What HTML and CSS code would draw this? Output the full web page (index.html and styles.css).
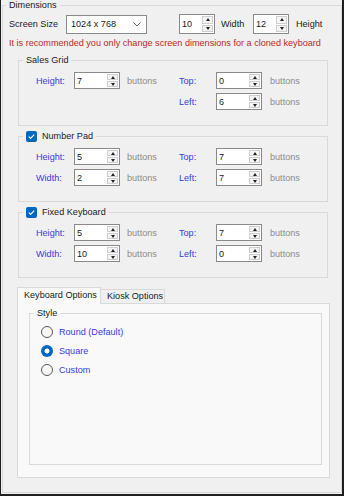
FILE: index.html
```html
<!DOCTYPE html>
<html lang="en">
<head>
    <meta charset="UTF-8">
    <title>Keyboard Settings</title>
    <link rel="stylesheet" href="styles.css">
</head>
<body>
    <div class="window">
        <fieldset class="group dims">
            <legend>Dimensions</legend>
            <div class="dims-body">
                <div class="screen-row">
                    <span class="screen-label">Screen Size</span>
                    <div class="combo">
                        <span>1024 x 768</span>
                        <svg width="8" height="5" viewBox="0 0 8 5"><polyline points="0.5,0.5 4,4 7.5,0.5" fill="none" stroke="#606060" stroke-width="1"/></svg>
                    </div>
                    <div class="spin spin-lg"><span class="val">10</span><div class="spin-btns"><span class="up"></span><span class="down"></span></div></div>
                    <span class="dim-label">Width</span>
                    <div class="spin spin-lg"><span class="val">12</span><div class="spin-btns"><span class="up"></span><span class="down"></span></div></div>
                    <span class="dim-label last">Height</span>
                </div>
                <p class="warning">It is recommended you only change screen dimensions for a cloned keyboard</p>

                <fieldset class="group sub">
                    <legend>Sales Grid</legend>
                    <div class="grid">
                        <span class="blue">Height:</span>
                        <div class="spin"><span class="val">7</span><div class="spin-btns"><span class="up"></span><span class="down"></span></div></div>
                        <span class="unit">buttons</span>
                        <span class="blue">Top:</span>
                        <div class="spin"><span class="val">0</span><div class="spin-btns"><span class="up"></span><span class="down"></span></div></div>
                        <span class="unit">buttons</span>
                        <span class="blue right">Left:</span>
                        <div class="spin"><span class="val">6</span><div class="spin-btns"><span class="up"></span><span class="down"></span></div></div>
                        <span class="unit">buttons</span>
                    </div>
                </fieldset>

                <fieldset class="group sub">
                    <legend class="check-legend"><span class="checkbox"><svg width="11" height="11" viewBox="0 0 11 11"><polyline points="2.8,5.6 4.6,7.4 8.2,3.6" fill="none" stroke="#fff" stroke-width="1.1"/></svg></span>Number Pad</legend>
                    <div class="grid">
                        <span class="blue">Height:</span>
                        <div class="spin"><span class="val">5</span><div class="spin-btns"><span class="up"></span><span class="down"></span></div></div>
                        <span class="unit">buttons</span>
                        <span class="blue">Top:</span>
                        <div class="spin"><span class="val">7</span><div class="spin-btns"><span class="up"></span><span class="down"></span></div></div>
                        <span class="unit">buttons</span>
                        <span class="blue">Width:</span>
                        <div class="spin"><span class="val">2</span><div class="spin-btns"><span class="up"></span><span class="down"></span></div></div>
                        <span class="unit">buttons</span>
                        <span class="blue">Left:</span>
                        <div class="spin"><span class="val">7</span><div class="spin-btns"><span class="up"></span><span class="down"></span></div></div>
                        <span class="unit">buttons</span>
                    </div>
                </fieldset>

                <fieldset class="group sub">
                    <legend class="check-legend"><span class="checkbox"><svg width="11" height="11" viewBox="0 0 11 11"><polyline points="2.8,5.6 4.6,7.4 8.2,3.6" fill="none" stroke="#fff" stroke-width="1.1"/></svg></span>Fixed Keyboard</legend>
                    <div class="grid">
                        <span class="blue">Height:</span>
                        <div class="spin"><span class="val">5</span><div class="spin-btns"><span class="up"></span><span class="down"></span></div></div>
                        <span class="unit">buttons</span>
                        <span class="blue">Top:</span>
                        <div class="spin"><span class="val">7</span><div class="spin-btns"><span class="up"></span><span class="down"></span></div></div>
                        <span class="unit">buttons</span>
                        <span class="blue">Width:</span>
                        <div class="spin"><span class="val">10</span><div class="spin-btns"><span class="up"></span><span class="down"></span></div></div>
                        <span class="unit">buttons</span>
                        <span class="blue">Left:</span>
                        <div class="spin"><span class="val">0</span><div class="spin-btns"><span class="up"></span><span class="down"></span></div></div>
                        <span class="unit">buttons</span>
                    </div>
                </fieldset>

                <div class="tabs">
                    <div class="tab-strip">
                        <div class="tab active">Keyboard Options</div>
                        <div class="tab kiosk">Kiosk Options</div>
                    </div>
                    <div class="tab-panel">
                        <fieldset class="group style-group">
                            <legend>Style</legend>
                            <div class="radios">
                                <label class="radio"><span class="dot"></span>Round (Default)</label>
                                <label class="radio"><span class="dot checked"></span>Square</label>
                                <label class="radio"><span class="dot"></span>Custom</label>
                            </div>
                        </fieldset>
                    </div>
                </div>
            </div>
        </fieldset>
    </div>
</body>
</html>
```

FILE: styles.css
```css
* {
    box-sizing: border-box;
}
body {
    margin: 0;
    font-family: "Liberation Sans", Arial, sans-serif;
    font-size: 9.1px;
    color: #1a1a1a;
    background: #f0f0f0;
}
.window {
    width: 344px;
    height: 496px;
    background: #f0f0f0;
    border-left: 1px solid #1f1f1f;
    border-right: 2px solid #1f1f1f;
    border-bottom: 2px solid #1f1f1f;
    padding: 0 0 1px 1px;
}

/* group boxes */
fieldset.group {
    margin: 0;
    padding: 0;
    border: 1px solid #d9d9d9;
    min-width: 0;
}
.group > legend {
    margin-left: 4px;
    padding: 0 3px;
    height: 12px;
    line-height: 12px;
}
.dims > legend {
    margin-left: 3px;
    height: 10px;
    line-height: 10px;
}
.dims-body {
    padding: 4px 0 14px 6px;
}
.check-legend {
    display: flex;
    align-items: center;
    gap: 5px;
}
.checkbox {
    width: 11px;
    height: 11px;
    border-radius: 2px;
    background: #0067c0;
    display: flex;
}

/* top row */
.screen-row {
    display: flex;
    align-items: center;
    height: 20px;
}
.screen-label {
    width: 57px;
}
.combo {
    width: 81px;
    height: 19px;
    background: #fff;
    border: 1px solid #8a8a8a;
    display: flex;
    align-items: center;
    justify-content: space-between;
    padding: 0 5px 0 4px;
    margin-right: 32px;
}
.dim-label {
    margin-left: 6px;
    width: 32px;
}
.dim-label.last {
    margin-left: 7px;
}
.warning {
    margin: 3px 0 5px;
    line-height: 12px;
    color: #c02828;
}

/* spin boxes */
.spin {
    width: 46px;
    height: 17px;
    background: #fff;
    border: 1px solid #8a8a8a;
    display: flex;
    justify-content: space-between;
}
.spin-lg {
    width: 36px;
    height: 20px;
}
.spin .val {
    padding-left: 2px;
    align-self: center;
}
.spin-btns {
    width: 12px;
    display: flex;
    flex-direction: column;
    gap: 1px;
    padding: 1px 1px 1px 0;
}
.spin-btns span {
    flex: 1;
    background: #f4f4f4;
    border: 1px solid #cfcfcf;
    display: flex;
    align-items: center;
    justify-content: center;
}
.spin-btns .up::after,
.spin-btns .down::after {
    content: "";
    width: 0;
    height: 0;
    border-left: 2.5px solid transparent;
    border-right: 2.5px solid transparent;
}
.spin-btns .up::after {
    border-bottom: 3px solid #222;
}
.spin-btns .down::after {
    border-top: 3px solid #222;
}

/* sub groups */
fieldset.sub {
    margin: 0 13px 0 9px;
}
fieldset.sub + fieldset.sub {
    margin-top: 4px;
}
.grid {
    display: grid;
    grid-template-columns: 38px 46px 59px 37px 47px auto;
    grid-auto-rows: 17px;
    row-gap: 4px;
    align-items: center;
    padding: 6px 0 15px 17px;
}
.blue {
    color: #3a3ae6;
}
.unit {
    padding-left: 7px;
    color: #8c8c8c;
}
.right {
    grid-column: 4;
}

/* tabs */
.tabs {
    margin: 9px 11px 0 8px;
}
.tab-strip {
    display: flex;
    align-items: flex-end;
    height: 16px;
}
.tab {
    height: 14px;
    line-height: 13px;
    padding-left: 6px;
    border: 1px solid #d9d9d9;
    border-bottom: none;
    background: #f0f0f0;
}
.tab.active {
    position: relative;
    height: 17px;
    margin-bottom: -1px;
    line-height: 15px;
    width: 84px;
    background: #f9f9f9;
}
.tab.kiosk {
    width: 65px;
    margin-left: -1px;
}
.tab-panel {
    height: 175px;
    border: 1px solid #d9d9d9;
    background: #f9f9f9;
    padding: 3px 7px 0 11px;
}
.radios {
    height: 145px;
    padding: 3px 0 0 11px;
    display: flex;
    flex-direction: column;
}
.radio {
    display: flex;
    align-items: center;
    gap: 6px;
    height: 19px;
    color: #3a3ae6;
}
.dot {
    width: 12px;
    height: 12px;
    border-radius: 50%;
    border: 1px solid #5a5a5a;
    background: #f7f7f7;
}
.dot.checked {
    border: none;
    background: radial-gradient(circle, #fff 0 2.2px, #0067c0 2.8px);
}
```
